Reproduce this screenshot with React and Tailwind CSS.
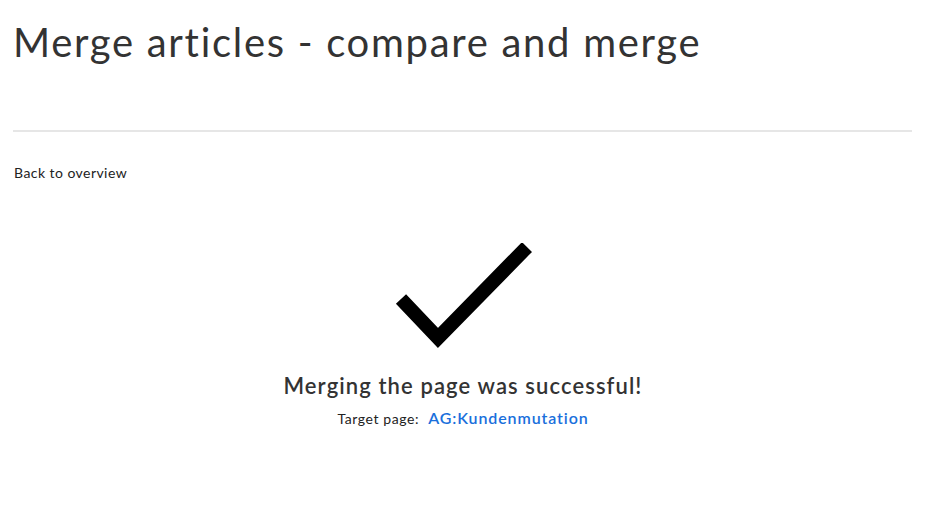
export default function App() {
  return (
    <div className="min-h-screen bg-white text-[#333] font-['Lato','Open_Sans',sans-serif]">
      <div className="px-[13px] pt-[18px]">
        <h1 className="text-[40px] leading-[48px] font-normal tracking-[1.7px] text-[#333]">
          Merge articles - compare and merge
        </h1>
        <hr className="mt-[64px] border-0 h-[2px] bg-[#e6e6e6] mr-[1px]" />
        <a href="#" className="block mt-[31px] ml-[1px] text-[14px] leading-[20px] tracking-[0.45px] text-[#222]">
          Back to overview
        </a>
      </div>

      {/* success message */}
      <div className="flex flex-col items-center mt-[60px]">
        <svg width="140" height="110" viewBox="0 0 140 110" className="ml-[2px]">
          <polyline
            points="7,56 44,95 133,4"
            fill="none"
            stroke="#000"
            strokeWidth="14"
            strokeLinecap="butt"
            strokeLinejoin="miter"
          />
        </svg>
        <h2 className="mt-[19px] text-[22px] leading-[28px] font-semibold tracking-[1.1px] text-[#333]">
          Merging the page was successful!
        </h2>
        <div className="mt-[6px] flex items-baseline gap-[9px]">
          <span className="text-[14px] tracking-[0.6px] text-[#222]">Target page:</span>
          <a href="#" className="text-[16px] font-semibold tracking-[0.9px] text-[#1a6fdc]">
            AG:Kundenmutation
          </a>
        </div>
      </div>
    </div>
  );
}
